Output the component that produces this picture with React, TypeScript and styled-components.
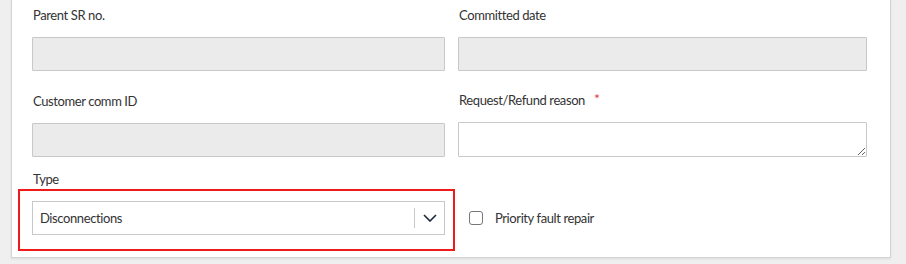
import React from 'react';
import styled, {createGlobalStyle} from "styled-components";

const GlobalStyle = createGlobalStyle`
  body {
    margin: 0;
    background: #efefef;
    font-family: Lato, "Open Sans", sans-serif;
    color: #333;
  }
`

export default function App() {
    return (
        <>
            <GlobalStyle/>
            <Page>
                <Card>
                    <Grid>
                        <Field>
                            <Label>Parent SR no.</Label>
                            <Input disabled/>
                        </Field>
                        <Field>
                            <Label>Committed date</Label>
                            <Input disabled/>
                        </Field>
                        <Field>
                            <Label>Customer comm ID</Label>
                            <Input disabled/>
                        </Field>
                        <Field>
                            <Label>Request/Refund reason <Required>*</Required></Label>
                            <TextArea/>
                        </Field>
                        <Field $last>
                            <Label>Type</Label>
                            <SelectWrap>
                                <Highlight/>
                                <SelectBox>
                                    <SelectValue>Disconnections</SelectValue>
                                    <SelectArrow>
                                        <svg width="14" height="8" viewBox="0 0 14 8">
                                            <polyline points="1,1 7,7 13,1" fill="none" stroke="#1b2838"
                                                      strokeWidth="1.6"/>
                                        </svg>
                                    </SelectArrow>
                                </SelectBox>
                            </SelectWrap>
                        </Field>
                        <CheckRow>
                            <CheckBox/>
                            <CheckLabel>Priority fault repair</CheckLabel>
                        </CheckRow>
                    </Grid>
                </Card>
            </Page>
        </>
    );
}

const Page = styled.div`
  width: 906px;
  height: 264px;
  overflow: hidden;
`
const Card = styled.div`
  margin-left: 11px;
  width: 880px;
  background: #fff;
  border: 1px solid #d4d4d4;
  border-top: none;
  box-shadow: 0 1px 2px rgba(0, 0, 0, 0.08);
  padding: 5px 0 22px 20px;
  box-sizing: border-box;
`
const Grid = styled.div`
  display: grid;
  grid-template-columns: 413px 409px;
  column-gap: 13px;
  row-gap: 19px;
  align-items: end;
`
const Field = styled.div<{ $last?: boolean }>`
  display: flex;
  flex-direction: column;
  gap: 12px;
  margin-top: ${p => p.$last ? '-7px' : '0'};
`
const Label = styled.div`
  font-size: 13px;
  letter-spacing: -0.4px;
  line-height: 20px;
  height: 20px;
  padding-left: 1px;
  color: #333;
`
const Required = styled.span`
  color: #e0383e;
  font-size: 14px;
  line-height: 0;
  margin-left: 6px;
  position: relative;
  top: -1px;
`
const Input = styled.input`
  height: 34px;
  box-sizing: border-box;
  border: 1px solid #c8c8c8;
  background: #ebebeb;
  border-radius: 1px;
  margin: 0;
`
const TextArea = styled.textarea`
  height: 35px;
  box-sizing: border-box;
  border: 1px solid #c8c8c8;
  background: #fff;
  border-radius: 1px;
  margin: 0;
  resize: vertical;
  display: block;
`
const SelectWrap = styled.div`
  position: relative;
`
const Highlight = styled.div`
  position: absolute;
  left: -14px;
  top: -12px;
  right: -10px;
  bottom: -16px;
  border: 2px solid #f01a1a;
  pointer-events: none;
`
const SelectBox = styled.div`
  height: 34px;
  box-sizing: border-box;
  border: 1px solid #c8c8c8;
  background: #fff;
  display: flex;
  align-items: center;
`
const SelectValue = styled.div`
  flex: 1;
  font-size: 13px;
  letter-spacing: -0.4px;
  padding-left: 7px;
  color: #333;
`
const SelectArrow = styled.div`
  width: 29px;
  height: 20px;
  border-left: 1px solid #c8c8c8;
  display: flex;
  align-items: center;
  justify-content: center;
`
const CheckRow = styled.div`
  display: flex;
  align-items: center;
  height: 34px;
  padding-left: 11px;
  gap: 12px;
`
const CheckBox = styled.span`
  width: 12px;
  height: 12px;
  border: 1px solid #777;
  border-radius: 3px;
  background: #fff;
`
const CheckLabel = styled.span`
  font-size: 13px;
  letter-spacing: -0.4px;
  color: #333;
`
